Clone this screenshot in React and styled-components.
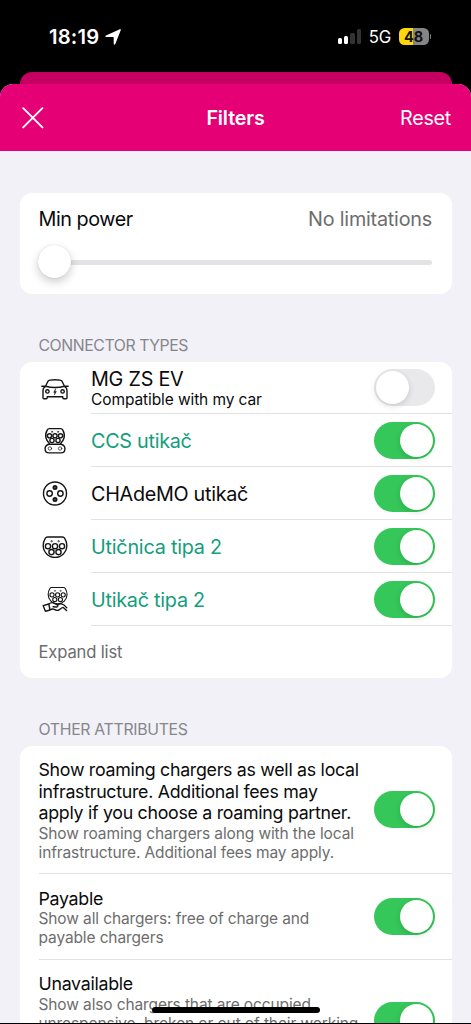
import { useState } from 'react';
import styled, { createGlobalStyle } from 'styled-components';

const CONNECTORS = [
  { id: 'car', icon: 'car', title: 'MG ZS EV', note: 'Compatible with my car', on: false, spacing: '-0.25px' },
  { id: 'ccs', icon: 'ccs', title: 'CCS utikač', accent: true, on: true, spacing: '-0.28px' },
  { id: 'chademo', icon: 'chademo', title: 'CHAdeMO utikač', on: true, spacing: '-0.3px' },
  { id: 'socket2', icon: 'type2', title: 'Utičnica tipa 2', accent: true, on: true, spacing: '-0.22px' },
  { id: 'plug2', icon: 'cable', title: 'Utikač tipa 2', accent: true, on: true, spacing: '-0.25px' },
];

const ATTRIBUTES = [
  {
    id: 'roaming',
    height: 128.5,
    title: ['Show roaming chargers as well as local', 'infrastructure. Additional fees may', 'apply if you choose a roaming partner.'],
    text: ['Show roaming chargers along with the local', 'infrastructure. Additional fees may apply.'],
  },
  {
    id: 'payable',
    height: 85.5,
    title: ['Payable'],
    text: ['Show all chargers: free of charge and', 'payable chargers'],
  },
  {
    id: 'unavailable',
    height: 122,
    title: ['Unavailable'],
    text: ['Show also chargers that are occupied,', 'unresponsive, broken or out of their working'],
  },
];

const CarIcon = () => (
  <S.Icon viewBox="0 0 28 28">
    <path d="M4.500 12.200 7 7.200Q8 5.800 14 5.800t7 1.400l2.500 5M4.500 12.200Q14 14.800 23.500 12.200M.8 12.300l3.700-.1M27.200 12.300l-3.700-.1M4.500 12.400Q2 14 2 16.500v7.300q0 1 1 1h2.200q1 0 1-1v-1h15.600v1q0 1 1 1H25q1 0 1-1v-7.300q0-2.500-2.500-4.100" />
    <circle cx="6.400" cy="17.400" r="1.700" />
    <circle cx="21.600" cy="17.400" r="1.700" />
    <path fill="#151515" strokeWidth=".4" d="m14.600 14.800-2 3.600h1.300l-.5 2.600 2-3.500h-1.300z" />
  </S.Icon>
);

const CcsIcon = () => (
  <S.Icon viewBox="0 0 28 28">
    <path d="M8.300 1.600h11.400q1.300 0 2 1.300 2.400 4.200 1.300 8.100-.8 3-3.300 5.400v.9q4.200.7 4.200 4.400 0 4.200-4 4.200H8.100q-4 0-4-4.200 0-3.700 4.200-4.400v-.9Q5.800 14 5 11 3.900 7.100 6.300 2.900 7 1.600 8.300 1.600zM8.500 17.300h11" />
    <circle cx="8.500" cy="8.800" r="2.100" />
    <circle cx="14" cy="8.800" r="2.100" />
    <circle cx="19.500" cy="8.800" r="2.100" />
    <circle cx="11" cy="13.500" r="2.100" />
    <circle cx="17" cy="13.500" r="2.100" />
    <circle cx="8.900" cy="21.500" r="1.700" strokeWidth=".7" />
    <circle cx="19.100" cy="21.500" r="1.700" strokeWidth=".7" />
    <circle cx="11" cy="4.800" r=".7" strokeWidth=".6" />
    <circle cx="17" cy="4.800" r=".7" strokeWidth=".6" />
  </S.Icon>
);

const ChademoIcon = () => (
  <S.Icon viewBox="0 0 28 28">
    <circle cx="14" cy="13.500" r="11.500" />
    <circle cx="8.600" cy="13.500" r="2.700" />
    <circle cx="19.400" cy="13.500" r="2.700" />
    <circle cx="14" cy="7.500" r="1.800" fill="#444" />
    <circle cx="14" cy="19.500" r="1.800" fill="#444" />
  </S.Icon>
);

const TypeTwoShape = () => (
  <>
    <path d="M6.400 4h15.200q1.200 0 2 1.200 2.200 3.600 2.200 7.400a11.800 11.800 0 0 1-23.600 0q0-3.800 2.200-7.400Q5.200 4 6.400 4z" />
    <circle cx="7" cy="13.200" r="2.600" />
    <circle cx="14" cy="13.200" r="2.600" />
    <circle cx="21" cy="13.200" r="2.600" />
    <circle cx="10.500" cy="19.100" r="2.600" />
    <circle cx="17.500" cy="19.100" r="2.600" />
    <circle cx="10.500" cy="8.200" r=".7" strokeWidth=".6" />
    <circle cx="17.500" cy="8.200" r=".7" strokeWidth=".6" />
  </>
);

const TypeTwoIcon = () => (
  <S.Icon viewBox="0 0 28 28">
    <TypeTwoShape />
  </S.Icon>
);

const CableIcon = () => (
  <S.Icon viewBox="0 0 28 28">
    <g transform="translate(5.400 -1.700) scale(.8)">
      <TypeTwoShape />
    </g>
    <path d="m2.200 19.700 5.600-1.700 1.200 6-4.600 1.200zM7.900 18q2.600-2.200 5.200-.8l3.200 1.600q1.300 1.600-.6 2.200l-3.600-.3M9 24q2.400-1.600 4.300-.6 2.700 1.800 5.200.2 2.300-2 3.700-2.200l3.400 3.200M16.300 18.800l3.500-1.200q3.500.8 6 4.200" />
  </S.Icon>
);

const ICONS = {
  car: CarIcon,
  ccs: CcsIcon,
  chademo: ChademoIcon,
  type2: TypeTwoIcon,
  cable: CableIcon,
};

const Toggle = ({ initial = true, label }) => {
  const [on, setOn] = useState(initial);

  return (
    <S.Switch type="button" role="switch" aria-checked={on} aria-label={label} $on={on} onClick={() => setOn(!on)}>
      <S.Knob />
    </S.Switch>
  );
};

const StatusBar = () => (
  <S.StatusBar>
    <S.Clock>18:19</S.Clock>
    <S.Arrow viewBox="0 0 16 16">
      <path d="M15.800 1.100 10.300 15q-.7 1.500-1.600 0V8.700q0-.7-.7-.7H1Q-.6 7.400 1 6.600L14.800.3q1.500-.5 1 .8z" />
    </S.Arrow>
    <S.Signal>
      <S.Bar $height={6} />
      <S.Bar $height={8.5} />
      <S.Bar $height={11.5} $dim />
      <S.Bar $height={15} $dim />
    </S.Signal>
    <S.Network>5G</S.Network>
    <S.Battery>48</S.Battery>
    <S.BatteryTip />
  </S.StatusBar>
);

const App = () => (
  <S.Screen>
    <GlobalStyle />
    <StatusBar />
    <S.BackSheet />
    <S.Sheet>
      <S.Header>
        <S.Close type="button" aria-label="Close">
          <svg width="22" height="22" viewBox="0 0 22 22">
            <path d="m1.200 1.200 19.200 19.200M20.400 1.200 1.200 20.400" />
          </svg>
        </S.Close>
        <S.Title>Filters</S.Title>
        <S.Reset type="button">Reset</S.Reset>
      </S.Header>
      <S.Body>
        <S.PowerCard>
          <S.PowerRow>
            <S.PowerLabel>Min power</S.PowerLabel>
            <S.PowerValue>No limitations</S.PowerValue>
          </S.PowerRow>
          <S.Slider>
            <S.Thumb />
            <S.Track />
          </S.Slider>
        </S.PowerCard>

        <S.SectionTitle $spacing="-0.42px">CONNECTOR TYPES</S.SectionTitle>
        <S.Card>
          {CONNECTORS.map(({ id, icon, title, note, accent, on, spacing }) => {
            const Icon = ICONS[icon];
            return (
              <S.Connector key={id}>
                <S.IconSlot>
                  <Icon />
                </S.IconSlot>
                <S.ConnectorMain>
                  <S.ConnectorText $compact={Boolean(note)}>
                    <S.Name $accent={accent} $spacing={spacing}>
                      {title}
                    </S.Name>
                    {note && <S.Note>{note}</S.Note>}
                  </S.ConnectorText>
                  <Toggle initial={on} label={title} />
                </S.ConnectorMain>
              </S.Connector>
            );
          })}
          <S.Expand type="button">Expand list</S.Expand>
        </S.Card>

        <S.SectionTitle $spacing="-0.3px">OTHER ATTRIBUTES</S.SectionTitle>
        <S.Card>
          {ATTRIBUTES.map(({ id, height, title, text }) => (
            <S.Attribute key={id} $height={height}>
              <S.AttributeBody>
                {title.map((line) => (
                  <S.AttributeTitle key={line}>{line}</S.AttributeTitle>
                ))}
                {text.map((line) => (
                  <S.AttributeText key={line}>{line}</S.AttributeText>
                ))}
              </S.AttributeBody>
              <Toggle label={title[0]} />
            </S.Attribute>
          ))}
        </S.Card>
      </S.Body>
    </S.Sheet>
    <S.HomeBar />
  </S.Screen>
);

const GlobalStyle = createGlobalStyle`
  * {
    box-sizing: border-box;
  }
  body {
    margin: 0;
    background: #000;
    font-family: Inter, 'Liberation Sans', sans-serif;
  }
  button {
    padding: 0;
    border: 0;
    background: none;
    font-family: inherit;
  }
`;

const S = {
  Screen: styled.main`
    position: relative;
    display: flex;
    flex-direction: column;
    width: 471px;
    height: 1024px;
    overflow: hidden;
    background: #000;
    border-bottom: 1px solid #000;
  `,
  StatusBar: styled.div`
    flex: none;
    display: flex;
    align-items: center;
    height: 72px;
    padding: 1px 0 0 49px;
    color: #fff;
  `,
  Clock: styled.span`
    width: 56px;
    font-size: 20.2px;
    font-weight: 600;
    letter-spacing: 0.2px;
  `,
  Arrow: styled.svg`
    width: 16px;
    height: 16px;
    fill: #fff;
  `,
  Signal: styled.div`
    display: flex;
    align-items: flex-end;
    gap: 2.3px;
    height: 15px;
    margin-left: 216.5px;
  `,
  Bar: styled.i`
    width: 4.2px;
    height: ${({ $height }) => $height}px;
    border-radius: 1.5px;
    background: ${({ $dim }) => ($dim ? '#333' : '#fff')};
  `,
  Network: styled.span`
    width: 30px;
    margin-left: 7.5px;
    font-size: 16.8px;
    font-weight: 400;
  `,
  Battery: styled.span`
    width: 30px;
    height: 16.5px;
    border-radius: 5.5px;
    background: linear-gradient(90deg, #ffd60a 48%, #858585 48%);
    color: #111;
    font-size: 14.5px;
    font-weight: 700;
    line-height: 17px;
    text-align: center;
  `,
  BatteryTip: styled.i`
    width: 1.5px;
    height: 5px;
    margin-left: 1px;
    border-radius: 0 2px 2px 0;
    background: #858585;
  `,
  BackSheet: styled.div`
    flex: none;
    height: 24px;
    margin: 0 19.5px -12px;
    border-radius: 12px 12px 0 0;
    background: #c60063;
  `,
  Sheet: styled.div`
    position: relative;
    flex: 1;
    min-height: 0;
    overflow: hidden;
    border-radius: 13px 13px 0 0;
    background: #f2f1f8;
  `,
  Header: styled.header`
    display: grid;
    grid-template-columns: 1fr auto 1fr;
    align-items: center;
    height: 67.4px;
    padding: 0 20px 0 22px;
    background: #e50076;
    color: #fff;
  `,
  Close: styled.button`
    height: 22px;
    justify-self: start;

    svg {
      display: block;
      fill: none;
      stroke: #fff;
      stroke-width: 1.9;
      stroke-linecap: round;
    }
  `,
  Title: styled.h1`
    margin: 0 2px 0 0;
    font-size: 19.7px;
    font-weight: 600;
    letter-spacing: -0.15px;
  `,
  Reset: styled.button`
    justify-self: end;
    color: #fff;
    font-size: 19.8px;
    letter-spacing: -0.3px;
  `,
  Body: styled.div`
    padding: 42px 19.5px 0;
  `,
  Card: styled.section`
    overflow: hidden;
    border-radius: 12px;
    background: #fff;
  `,
  PowerCard: styled.section`
    height: 100.4px;
    padding: 14px 19.5px 0 19px;
    border-radius: 12px;
    background: #fff;
  `,
  PowerRow: styled.div`
    display: flex;
    justify-content: space-between;
    font-size: 19.8px;
    line-height: 24px;
  `,
  PowerLabel: styled.span`
    color: #0b0b0b;
    letter-spacing: -0.45px;
  `,
  PowerValue: styled.span`
    color: #6d6d6d;
    letter-spacing: -0.22px;
  `,
  Slider: styled.div`
    display: flex;
    align-items: center;
    height: 33px;
    margin-top: 13.4px;
  `,
  Thumb: styled.div`
    flex: none;
    width: 33px;
    height: 33px;
    margin-left: -0.5px;
    border-radius: 50%;
    background: #fff;
    box-shadow: 0 0 1px #0003, 0 4px 10px #00000033;
    z-index: 1;
  `,
  Track: styled.div`
    flex: 1;
    height: 5px;
    margin: 2px 0 0 -2px;
    border-radius: 3px;
    background: #e3e3e5;
  `,
  SectionTitle: styled.h2`
    height: 67.8px;
    margin: 0;
    padding: 41.8px 19px 0;
    color: #86868b;
    font-size: 15.8px;
    font-weight: 400;
    line-height: 20px;
    letter-spacing: ${({ $spacing }) => $spacing};
  `,
  Connector: styled.div`
    display: flex;
    height: 52.9px;
  `,
  IconSlot: styled.div`
    display: flex;
    flex: none;
    align-items: center;
    width: 71.5px;
    padding-left: 21.5px;
  `,
  Icon: styled.svg`
    width: 28px;
    height: 28px;
    overflow: visible;
    fill: none;
    stroke: #151515;
    stroke-width: 1.4;
    stroke-linejoin: round;
    stroke-linecap: round;
  `,
  ConnectorMain: styled.div`
    display: flex;
    flex: 1;
    align-items: center;
    justify-content: space-between;
    padding-right: 16.5px;
    border-bottom: 1px solid #e2e2e5;
  `,
  ConnectorText: styled.div`
    display: flex;
    flex-direction: column;
    padding-top: ${({ $compact }) => ($compact ? 3 : 1)}px;
    line-height: ${({ $compact }) => ($compact ? 22 : 24)}px;
    white-space: nowrap;
  `,
  Name: styled.span`
    color: ${({ $accent }) => ($accent ? '#139d7b' : '#0b0b0b')};
    font-size: 19.8px;
    letter-spacing: ${({ $spacing }) => $spacing};
  `,
  Note: styled.span`
    color: #0b0b0b;
    font-size: 15.5px;
    line-height: 20px;
    letter-spacing: -0.1px;
  `,
  Expand: styled.button`
    display: block;
    height: 52px;
    padding-left: 19px;
    color: #6d6d6d;
    font-size: 16.6px;
    letter-spacing: -0.15px;
  `,
  Switch: styled.button`
    display: flex;
    flex: none;
    justify-content: ${({ $on }) => ($on ? 'flex-end' : 'flex-start')};
    width: 61px;
    height: 37px;
    padding: 2px;
    border-radius: 19px;
    background: ${({ $on }) => ($on ? '#35c759' : '#e9e9eb')};
  `,
  Knob: styled.i`
    width: 33px;
    height: 33px;
    border-radius: 50%;
    background: #fff;
    box-shadow: 0 2px 6px #00000024;
  `,
  Attribute: styled.div`
    display: flex;
    align-items: center;
    justify-content: space-between;
    height: ${({ $height }) => $height}px;
    margin-left: 19px;
    padding-right: 16.5px;
    border-bottom: 1px solid #e2e2e5;
    white-space: nowrap;
  `,
  AttributeBody: styled.div`
    align-self: flex-start;
    padding-top: 13.4px;
  `,
  AttributeTitle: styled.div`
    color: #0b0b0b;
    font-size: 17.8px;
    line-height: 21.5px;
    letter-spacing: -0.29px;
  `,
  AttributeText: styled.div`
    color: #6d6d6d;
    font-size: 15.5px;
    line-height: 19px;
    letter-spacing: -0.12px;
  `,
  HomeBar: styled.div`
    position: absolute;
    left: 152px;
    bottom: 10px;
    width: 168px;
    height: 6px;
    border-radius: 3px;
    background: #000;
  `,
};

export default App;
